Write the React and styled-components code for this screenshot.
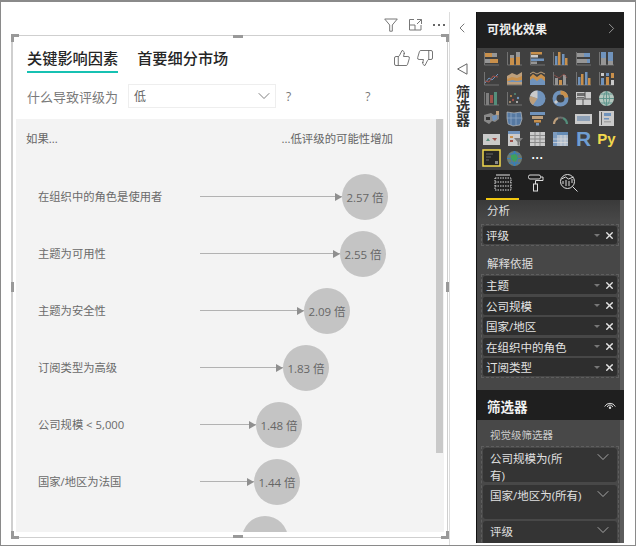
import React from "react";
import styled, { createGlobalStyle } from "styled-components";
import { ThumbsUp, ThumbsDown, ChevronDown, ChevronLeft, ChevronRight, X } from "lucide-react";

const Global = createGlobalStyle`
  html, body { margin: 0; padding: 0; background: #fff; }
  * { box-sizing: border-box; }
  body { font-family: "Open Sans", "Noto Sans CJK SC", sans-serif; }
`;

const Page = styled.div`
  width: 636px; height: 546px; display: flex; overflow: hidden;
  border: 1px solid #8a8a8a; border-top-width: 2px; background: #fff;
`;
const Main = styled.div`width: 448px; flex: none; display: flex; flex-direction: column;`;
const Toolbar = styled.div`
  height: 33px; flex: none; display: flex; align-items: center; justify-content: flex-end;
  gap: 11px; padding: 13px 4px 0 0; color: #777;
`;
const Frame = styled.div`
  position: relative; margin-left: 10px; width: 437px; height: 503px; flex: none;
  border: 1px solid #cfcfcf; border-left-width: 2px;
  display: flex; flex-direction: column;
`;
const Corner = styled.div`
  position: absolute; width: 8px; height: 8px; border-color: #999; border-style: solid; border-width: 0;
  ${p => p.$top ? "top: -2px; border-top-width: 3px;" : "bottom: -2px; border-bottom-width: 3px;"}
  ${p => p.$left ? "left: -2px; border-left-width: 3px;" : "right: -2px; border-right-width: 3px;"}
`;
const Handle = styled.div`
  position: absolute; background: #999;
  ${p => p.$v ? `width: 3px; height: 10px; top: 246px; ${p.$left ? "left: -2px;" : "right: -2px;"}`
    : `height: 3px; width: 10px; left: 220px; ${p.$up ? "top: -1px;" : "bottom: -1px;"}`}
`;
const TabRow = styled.div`display: flex; height: 25px; margin-top: 12px; padding: 0 13px 0 14px; flex: none; align-items: flex-start;`;
const Tab = styled.div`
  height: 25px; font-size: 15.2px; line-height: 21px; font-weight: 500; color: #252525; margin-right: 19px;
  border-bottom: 2px solid ${p => p.$active ? "#16c1b2" : "transparent"}; white-space: nowrap;
`;
const Thumbs = styled.div`margin-left: auto; display: flex; gap: 5px; color: #666; padding-top: 1px;`;
const Prompt = styled.div`display: flex; align-items: center; height: 24px; margin-top: 11px; padding-left: 14px; flex: none; position: relative;`;
const PromptLabel = styled.div`font-size: 13px; color: #7a7a7a; width: 101px; flex: none; white-space: nowrap;`;
const Select = styled.div`
  width: 148px; height: 24px; border: 1.5px solid #eee; display: flex; align-items: center;
  justify-content: space-between; padding: 0 1px 0 5px; font-size: 12px; color: #666; flex: none;
`;
const Help = styled.span`font-size: 12px; color: #777; margin-left: ${p => p.$gap}px;`;
const Chart = styled.div`
  position: relative; margin: 11px 0 0 3px; width: 428px; height: 413px; background: #f3f3f3; overflow: hidden; flex: none;
`;
const ChartHead = styled.div`
  height: 49px; display: flex; justify-content: space-between; align-items: flex-start;
  padding: 11px 51px 0 10px; font-size: 11.4px; color: #666;
`;
const Row = styled.div`height: 57px; display: flex; align-items: center; padding-left: 22px;`;
const RowLabel = styled.div`width: 162px; flex: none; font-size: 11.3px; color: #6a6a6a; white-space: nowrap; padding-bottom: 2px;`;
const Arrow = styled.div`
  height: 1.5px; background: #b2b2b2; position: relative; flex: none;
  &::after {
    content: ""; position: absolute; right: 0; top: -3px;
    border-left: 7px solid #8f8f8f; border-top: 4px solid transparent; border-bottom: 4px solid transparent;
  }
`;
const Bubble = styled.div`
  width: 46px; height: 46px; border-radius: 50%; background: #c4c4c4; flex: none;
  display: flex; align-items: center; justify-content: center; font-size: 11.5px; color: #666; white-space: nowrap;
`;
const Thumb = styled.div`position: absolute; right: 1px; top: 0; width: 7px; height: 334px; background: #c9c9c9;`;

const Strip = styled.div`
  width: 27px; flex: none; margin-top: 10px; border-left: 1px solid #ddd; display: flex; flex-direction: column; align-items: center; color: #555; padding: 8px 2px 0 0;
`;
const VerticalTitle = styled.div`
  writing-mode: vertical-rl; font-size: 14px; font-weight: 700; color: #333; line-height: 14px; margin-top: 10px;
`;

const Pane = styled.div`
  width: 148px; flex: none; margin-top: 10px; height: 531px; background: #444; border-left: 1px solid #111; display: flex; flex-direction: column; overflow: hidden;
`;
const PaneHead = styled.div`
  height: 36px; flex: none; background: #1f1f1f; color: #f0f0f0; font-size: 12px; font-weight: 700;
  display: flex; align-items: center; justify-content: space-between; padding: 0 4px 3px 10px;
`;
const IconGrid = styled.div`
  height: 122px; flex: none; background: #404040; display: grid; align-content: start;
  grid-template-columns: repeat(6, 23px); grid-auto-rows: 19.9px; padding: 1px 0 0 3px;
`;
const Cell = styled.div`display: flex; align-items: center; justify-content: center; font-weight: 700; color: ${p => p.$c || "#fff"}; font-size: ${p => p.$s || 12}px; font-family: "Liberation Sans", sans-serif; line-height: 1;`;
const IconFace = styled.div`opacity: 0.82; display: flex;`;
const PaneTabs = styled.div`height: 30px; flex: none; background: #1f1f1f; display: flex; padding-left: 9px;`;
const PaneTab = styled.div`
  width: ${p => p.$w}px; height: 30px; display: flex; justify-content: center; padding-top: 3px;
  border-bottom: 2px solid ${p => p.$active ? "#f2c811" : "transparent"};
`;
const Fields = styled.div`height: 190px; flex: none; padding: 4px 5px 0 4px; position: relative; background: linear-gradient(#3a3a3a, #474747 20px);`;
const PaneScroll = styled.div`position: absolute; right: 0; top: 0; bottom: 0; width: 4px; background: #5c5c5c;`;
const FieldTitle = styled.div`font-size: 11.5px; color: #ddd; height: ${p => p.$h}px; padding-left: 6px; line-height: 14px;`;
const Well = styled.div`
  border: 1px dashed #5e5e5e; padding: 1px; margin-bottom: ${p => p.$mb || 0}px; width: 138px;
  display: flex; flex-direction: column; gap: 2.5px;
`;
const Field = styled.div`
  height: 18px; background: #2e2e2e; border-radius: 2px; display: flex; align-items: center;
  padding: 0 2px 0 3px; font-size: 11.5px; color: #e4e4e4; white-space: nowrap;
`;
const Caret = styled.span`
  margin-left: auto; margin-right: 4px; border-top: 3px solid #777; border-left: 3px solid transparent; border-right: 3px solid transparent;
`;
const FilterHead = styled.div`
  height: 30px; flex: none; background: #1f1f1f; color: #f2f2f2; font-size: 13.5px; font-weight: 700;
  display: flex; align-items: center; justify-content: space-between; padding: 2px 8px 0 10px;
`;
const Filters = styled.div`flex: 1; padding: 8px 5px 0 4px; position: relative; background: #484848; min-height: 0;`;
const FilterTitle = styled.div`font-size: 10.5px; color: #ccc; padding-left: 9px; height: 18px; line-height: 14px;`;
const FilterCard = styled.div`
  height: 34px; background: #343434; border-radius: 3px; padding: 2px 4px 0 7px; display: flex; justify-content: space-between;
  font-size: 11.5px; line-height: 17px; color: #e0e0e0; flex: none;
`;
const FilterName = styled.div`width: 76px; word-break: break-all; line-break: anywhere;`;
const WideName = styled.div`white-space: nowrap;`;
const FilterChevron = styled(ChevronDown)`margin-top: -3px; flex: none;`;

const rows = [
  ["在组织中的角色是使用者", "2.57 倍", 365],
  ["主题为可用性", "2.55 倍", 363],
  ["主题为安全性", "2.09 倍", 327],
  ["订阅类型为高级", "1.83 倍", 306],
  ["公司规模 < 5,000", "1.48 倍", 279],
  ["国家/地区为法国", "1.44 倍", 277],
  ["", "", 265],
];

const O = "#e8a24e", G = "#a9a9a9", B = "#7ba6d8", A = "#7d7d7d", W = "#e9e9e9", T = "#d9b58a", R = "#b4574f", N = "#59a089";
const Ax = () => <path d="M1.5 2v13H16" fill="none" stroke={A} />;
const r = (x, y, w, h, f) => <rect x={x} y={y} width={w} height={h} fill={f} />;
const Svg = ({ children }) => <svg width="17" height="17" viewBox="0 0 17 17">{children}</svg>;
const Globe = ({ dark }) => (
  <>
    <circle cx="8.5" cy="8.5" r="7.5" fill={dark ? "#6e7a70" : "#cfe6dc"} />
    <path d="M1 8.5h15M8.5 1v15M3 4h11M3 13h11M8.5 1c-4 4-4 11 0 15M8.5 1c4 4 4 11 0 15" stroke={dark ? "#2f7fc4" : "#5fa59a"} strokeWidth=".9" fill="none" />
    {dark && <path d="M5 5l5-1 2 4-3 4-4-3z" fill="#3fa05e" />}
  </>
);
const icons = [
  <><Ax />{r(2,3,7,4,O)}{r(9,3,5,4,G)}{r(2,9,5,4,G)}{r(7,9,8,4,O)}</>,
  <><Ax />{r(4,8,4,7,O)}{r(4,5,4,3,G)}{r(10,7,4,8,O)}{r(10,2,4,5,G)}</>,
  <><Ax />{r(2,2,11,2.5,O)}{r(2,5,7,2.5,W)}{r(2,8.5,13,2.5,B)}{r(2,11.5,6,2.5,G)}</>,
  <><Ax />{r(3,6,2.5,9,B)}{r(6,2,2.5,13,O)}{r(10,4,2.5,11,B)}{r(13,8,2.5,7,O)}</>,
  <><Ax />{r(2,3,7,4,G)}{r(9,3,6,4,B)}{r(2,9,10,4,G)}{r(12,9,3,4,B)}</>,
  <><Ax />{r(3,2,5,6,B)}{r(3,8,5,7,G)}{r(10,2,5,9,B)}{r(10,11,5,4,G)}</>,
  <><Ax /><path d="M2 13l4-5 3 2 6-6" stroke={B} fill="none" /><path d="M2 11l4 1 4-6 5 1" stroke={R} fill="none" /></>,
  <><path d="M1 6l5-3 5 2 5-3v13H1z" fill={T} /><path d="M1 9l5-2 5 1 5-2v5H1z" fill={O} /><path d="M1 12l5-2 5 1 5-1v2H1z" fill={B} /><path d="M1 15h15" stroke={A} /></>,
  <><path d="M1 7l3-3 4 3 4-3 4 3v8H1z" fill={O} /><path d="M1 10l3-2 4 3 4-3 4 3v4H1z" fill={B} /><path d="M1 4l3-2 4 2 4-2 4 2" stroke={T} fill="none" /></>,
  <><Ax />{r(3,8,3,7,G)}{r(7,10,3,5,O)}{r(11,5,3,10,G)}<path d="M2 5l5 3 5-4 3 4" stroke={R} fill="none" strokeWidth=".7" /></>,
  <><Ax />{r(3,7,2.5,8,B)}{r(6,4,2.5,11,O)}{r(10,2,2.5,13,B)}{r(13,8,2.5,7,O)}</>,
  <><Ax />{r(3,3,3,3,W)}{r(3,8,3,7,B)}{r(8,7,3,8,O)}{r(8,3,3,3,B)}{r(13,3,3,5,O)}{r(13,10,3,5,W)}</>,
  <><Ax />{r(3,3,3,12,"#8c8c8c")}{r(7,5,3,8,R)}{r(11,2,3,13,N)}</>,
  <><Ax /><circle cx="5" cy="6" r="1" fill={O}/><circle cx="9" cy="4" r="1" fill={N}/><circle cx="7" cy="10" r="1.2" fill={R}/><circle cx="12" cy="8" r="1.2" fill={B}/><circle cx="4" cy="12" r="1" fill={T}/><circle cx="11" cy="12" r="1" fill={W}/></>,
  <><circle cx="8.5" cy="8.5" r="8" fill={B}/><path d="M8.5 8.5V.5A8 8 0 0 0 1 6z" fill={W}/><path d="M8.5 8.5L1 6a8 8 0 0 0 3 9z" fill={T}/></>,
  <><circle cx="8.5" cy="8.5" r="6" fill="none" stroke={B} strokeWidth="4"/><path d="M8.5 2.5a6 6 0 0 1 6 5" stroke={O} strokeWidth="4" fill="none"/><path d="M3 11l2 2" stroke={W} strokeWidth="3"/></>,
  <>{r(1,2,15,13,W)}{r(2,3,8,3,"#777")}{r(2,7,7,1,"#777")}<path d="M10 2v7M1 9h15M8 9v6" stroke="#555" /></>,
  <Globe />,
  <><path d="M1 5l7-2 3 2 5-2v6l-4 3-3-1-3 3-5-3z" fill="#9a9a9a"/><path d="M9 6l5-1v4l-4 2z" fill={B}/><path d="M3 7h4v3H3z" fill="#333"/><path d="M13 1h3v4h-3z" fill={T}/></>,
  <><path d="M1 2l7 1 7-1 1 7-2 6-7 1-5-2-1-6z" fill="#5b86b8" stroke={W} strokeWidth=".6"/><path d="M5 3v12M1 8h15M10 3v12" stroke="#a9c6e6" strokeWidth=".7"/></>,
  <>{r(1,2,15,3,B)}{r(3,6,11,3,T)}{r(5,10,7,2.5,O)}{r(7,13,3,2.5,B)}</>,
  <><path d="M2 14a7 7 0 0 1 4-6" stroke={T} strokeWidth="2.2" fill="none"/><path d="M6 8a7 7 0 0 1 5 0" stroke="#777" strokeWidth="2.2" fill="none"/><path d="M11 8a7 7 0 0 1 4 6" stroke={N} strokeWidth="2.2" fill="none"/></>,
  <>{r(0,4,17,10,W)}<rect x="2" y="6" width="13" height="5" fill="#9fb6d0"/></>,
  <>{r(1,1,15,15,W)}{r(3,2,1,13,"#666")}{r(6,3,7,3,B)}{r(6,8,5,1.5,B)}{r(6,11,7,1.5,"#bbb")}</>,
  <>{r(0,4,17,11,W)}<path d="M3 11l2-3 2 3z" fill={N}/><path d="M9 8h5l-2 3z" fill={R}/></>,
  <>{r(2,1,12,15,W)}{r(2,1,12,3,B)}{r(4,6,3,2,O)}{r(4,10,3,2,R)}<path d="M8 8h9l-3.5 4v4l-2-1v-3z" fill="#8a8a8a"/></>,
  <>{r(1,2,15,14,W)}<path d="M1 5.5h15M1 9h15M1 12.5h15M6 2v14M11 2v14" stroke="#999" /></>,
  <>{r(1,2,15,14,"#c6d8ec")}{r(1,2,15,3,"#6f9ed2")}{r(1,2,4,14,"#8ab0dc")}<path d="M1 9h15M1 12.5h15M9 5v11M13 5v11" stroke="#fff" strokeWidth=".7"/></>,
];

const FilterIcon = () => (
  <svg width="14" height="14" viewBox="0 0 14 14" fill="none" stroke="#777"><path d="M.7 1h12.6L8.3 7v6.2H5.7V7z" /></svg>
);
const FocusIcon = () => (
  <svg width="13" height="12" viewBox="0 0 13 12" fill="none" stroke="#777"><path d="M5 .5H.5v10.5h11.5V6M.5 6H6v5" /><path d="M8 .5h4.5V5M12.5.5L8 5" /></svg>
);
const DotsIcon = () => (
  <svg width="12" height="4" viewBox="0 0 12 4" fill="#666"><rect y="1" width="2" height="2" /><rect x="5" y="1" width="2" height="2" /><rect x="10" y="1" width="2" height="2" /></svg>
);
const Megaphone = () => (
  <svg width="11" height="12" viewBox="0 0 11 12" fill="none" stroke="#666" style={{ marginTop: 27 }}><path d="M.6 6L10 .8v10.4z" /></svg>
);
const Selected = () => (
  <svg width="19" height="18" viewBox="0 0 19 18">
    <rect x="1" y="1" width="17" height="16" fill="#262626" stroke="#f2d94e" strokeWidth="1.5" />
    <path d="M4 5h7M4 8h5M4 11h3" stroke="#666" />
    <rect x="13" y="12" width="3" height="3" fill="#888" />
  </svg>
);
const FieldsIcon = () => (
  <svg width="18" height="20" viewBox="0 0 18 20" fill="none" stroke="#ddd" strokeWidth="1">
    <path d="M2 2h14" strokeWidth="1.6" stroke="#999"/><path d="M1 5h16v12H1zM1 9h16M1 13h16" strokeDasharray="1.5 1" />
  </svg>
);
const RollerIcon = () => (
  <svg width="18" height="20" viewBox="0 0 18 20" fill="none" stroke="#ddd"><rect x="1.5" y="2" width="12" height="4" rx="1.5" /><path d="M13.5 4H16v3.5H8.5V11" /><rect x="6.5" y="11" width="4" height="7" /></svg>
);
const AnalyticsIcon = () => (
  <svg width="20" height="20" viewBox="0 0 20 20" fill="none" stroke="#ddd"><circle cx="8.5" cy="8.5" r="7" /><path d="M13.5 13.5l5 5M4 11V8M7 13V7M10 13V8M13 10V6M2.5 6l4-2 3 2 5-2" /></svg>
);
const EyeArc = () => (
  <svg width="12" height="8" viewBox="0 0 12 8" fill="none" stroke="#ddd"><path d="M.7 4.5a6 6 0 0 1 10.6 0" /><path d="M3.3 5a2.8 2.8 0 0 1 5.4 0" /><circle cx="6" cy="5.8" r="1.2" fill="#ddd" stroke="none" /></svg>
);

export default function App() {
  return (
    <>
      <Global />
      <Page>
        <Main>
          <Toolbar><FilterIcon /><FocusIcon /><DotsIcon /></Toolbar>
          <Frame>
            <Corner $top $left /><Corner $top /><Corner $left /><Corner />
            <Handle $up /><Handle /><Handle $v $left /><Handle $v />
            <TabRow>
              <Tab $active>关键影响因素</Tab>
              <Tab>首要细分市场</Tab>
              <Thumbs><ThumbsUp size={18} strokeWidth={1.2} /><ThumbsDown size={18} strokeWidth={1.2} /></Thumbs>
            </TabRow>
            <Prompt>
              <PromptLabel>什么导致评级为</PromptLabel>
              <Select>低<ChevronDown size={20} strokeWidth={1} color="#666" /></Select>
              <Help $gap={10}>?</Help>
              <Help $gap={74}>?</Help>
            </Prompt>
            <Chart>
              <ChartHead><span>如果...</span><span>...低评级的可能性增加</span></ChartHead>
              {rows.map(([label, value, cx], i) => (
                <Row key={i}>
                  <RowLabel>{label}</RowLabel>
                  <Arrow style={{ width: cx - 23 - 200 }} />
                  <Bubble>{value}</Bubble>
                </Row>
              ))}
              <Thumb />
            </Chart>
          </Frame>
        </Main>
        <Strip>
          <ChevronLeft size={16} strokeWidth={1.2} />
          <Megaphone />
          <VerticalTitle>筛选器</VerticalTitle>
        </Strip>
        <Pane>
          <PaneHead>可视化效果<ChevronRight size={17} strokeWidth={1.2} color="#aaa" /></PaneHead>
          <IconGrid>
            {icons.map((ic, i) => <Cell key={i}><IconFace><Svg>{ic}</Svg></IconFace></Cell>)}
            <Cell $c="#6f9ed2" $s={21}>R</Cell>
            <Cell $c="#f2d94e" $s={15}>Py</Cell>
            <Cell><Selected /></Cell>
            <Cell><Svg><Globe dark /></Svg></Cell>
            <Cell $s={12}>···</Cell>
          </IconGrid>
          <PaneTabs>
            <PaneTab $w={33} $active><FieldsIcon /></PaneTab>
            <PaneTab $w={33}><RollerIcon /></PaneTab>
            <PaneTab $w={33}><AnalyticsIcon /></PaneTab>
          </PaneTabs>
          <Fields>
            <PaneScroll />
            <FieldTitle $h={20}>分析</FieldTitle>
            <Well $mb={11}>
              <Field>评级<Caret /><X size={11} strokeWidth={3} /></Field>
            </Well>
            <FieldTitle $h={17}>解释依据</FieldTitle>
            <Well>
              {["主题", "公司规模", "国家/地区", "在组织中的角色", "订阅类型"].map(f => (
                <Field key={f}>{f}<Caret /><X size={11} strokeWidth={3} /></Field>
              ))}
            </Well>
          </Fields>
          <FilterHead>筛选器<EyeArc /></FilterHead>
          <Filters>
            <PaneScroll />
            <FilterTitle>视觉级筛选器</FilterTitle>
            <Well>
              <FilterCard><FilterName>公司规模为(所有)</FilterName><FilterChevron size={20} strokeWidth={0.8} /></FilterCard>
              <FilterCard><WideName>国家/地区为(所有)</WideName><FilterChevron size={20} strokeWidth={0.8} /></FilterCard>
              <FilterCard><WideName>评级</WideName><FilterChevron size={20} strokeWidth={0.8} /></FilterCard>
            </Well>
          </Filters>
        </Pane>
      </Page>
    </>
  );
}
